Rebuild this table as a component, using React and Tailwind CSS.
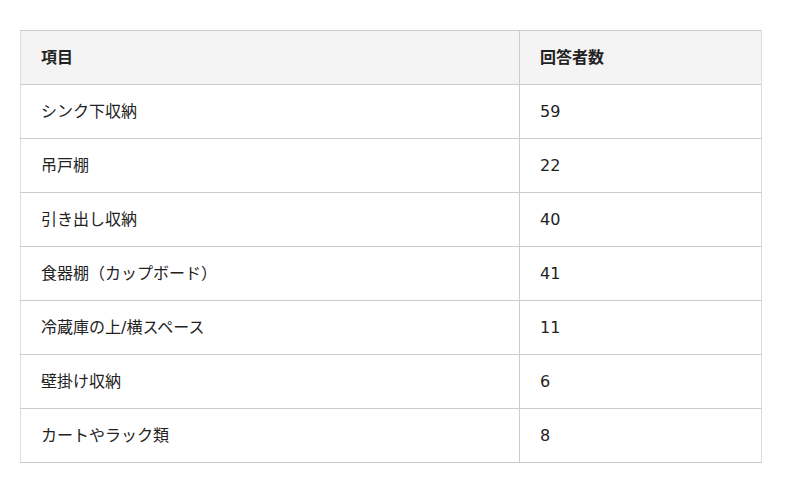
const rows = [
  { item: 'シンク下収納', count: 59 },
  { item: '吊戸棚', count: 22 },
  { item: '引き出し収納', count: 40 },
  { item: '食器棚（カップボード）', count: 41 },
  { item: '冷蔵庫の上/横スペース', count: 11 },
  { item: '壁掛け収納', count: 6 },
  { item: 'カートやラック類', count: 8 },
];

export default function App() {
  return (
    <div
      className="min-h-screen bg-white pt-[30px] pl-5 text-[16px] text-[#222]"
      style={{ fontFamily: '"DejaVu Sans", "Noto Sans CJK JP", sans-serif' }}
    >
      <table className="w-[742px] border-collapse border border-[#ddd]">
        <thead>
          <tr className="h-[54px] bg-[#f4f4f4]">
            <th className="w-[499px] border border-[#ccc] border-l-[#ddd] px-5 text-left font-bold">項目</th>
            <th className="border border-[#ccc] border-r-[#ddd] px-5 text-left font-bold">回答者数</th>
          </tr>
        </thead>
        <tbody>
          {rows.map((r) => (
            <tr key={r.item} className="h-[54px]">
              <td className="border border-[#ccc] border-l-[#ddd] px-5">{r.item}</td>
              <td className="border border-[#ccc] border-r-[#ddd] px-5">{r.count}</td>
            </tr>
          ))}
        </tbody>
      </table>
    </div>
  );
}
